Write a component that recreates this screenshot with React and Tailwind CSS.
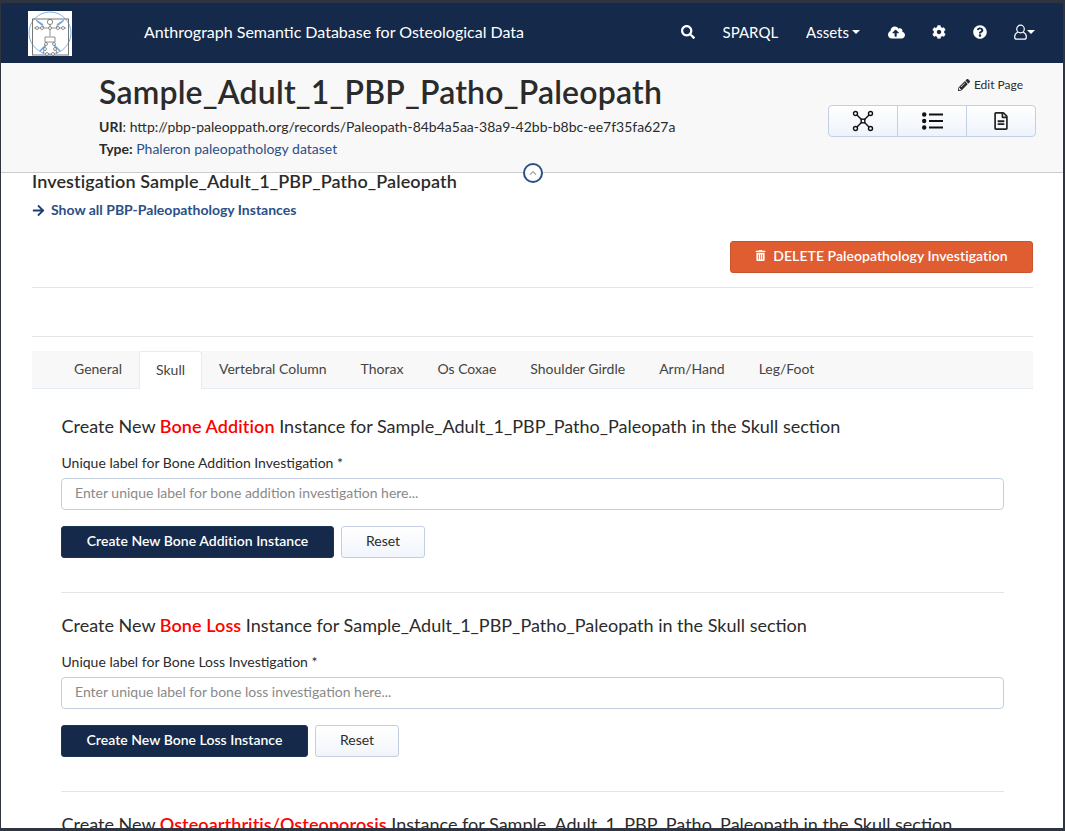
import React from "react";
import { FaSearch, FaCloudUploadAlt, FaCog, FaQuestionCircle, FaPencilAlt, FaTrashAlt, FaArrowRight, FaRegFileAlt, FaChevronUp } from "react-icons/fa";

function Logo() {
  return (
    <div className="w-[44px] h-[45px] bg-white shrink-0 mt-[3px]">
      <svg viewBox="0 0 44 45" className="w-full h-full" fill="none">
        <circle cx="22" cy="22" r="21" stroke="#7db4ea" strokeWidth="1" />
        <rect x="4.5" y="8" width="36" height="36" stroke="#777" strokeWidth="1" />
        <circle cx="22" cy="11" r="2.6" stroke="#666" strokeWidth="0.8" />
        <path d="M6 17h32M22 13.5v12M17 26h10v5H17zM18 31l-3 12M26 31l3 12M8 9l8 7M36 9l-8 7" stroke="#777" strokeWidth="0.8" />
        <path d="M9 10l6 4M35 10l-6 4M12 40l6-6M32 40l-6-6" stroke="#6aa8e6" strokeWidth="1.6" />
        {[[9,17],[14,17],[30,17],[35,17],[22,17],[18,33],[26,33],[17,38],[27,38],[19,43],[25,43]].map(([x,y],i)=>(
          <circle key={i} cx={x} cy={y} r="1.5" fill="#fff" stroke="#666" strokeWidth="0.7" />
        ))}
      </svg>
    </div>
  );
}

function NetworkIcon() {
  return (
    <svg width="22" height="22" viewBox="0 0 22 22" fill="none" stroke="#111" strokeWidth="1.4">
      <circle cx="3.5" cy="3.5" r="2" /><circle cx="18.5" cy="3.5" r="2" />
      <circle cx="3.5" cy="18.5" r="2" /><circle cx="18.5" cy="18.5" r="2" />
      <rect x="9.2" y="9.2" width="3.6" height="3.6" />
      <path d="M5 5l4.2 4.2M17 5l-4.2 4.2M5 17l4.2-4.2M17 17l-4.2-4.2" />
    </svg>
  );
}

function ListIcon() {
  return (
    <svg width="21" height="18" viewBox="0 0 21 18" fill="#111">
      <circle cx="2.2" cy="2.5" r="2.2" /><circle cx="2.2" cy="9" r="2.2" /><circle cx="2.2" cy="15.5" r="2.2" />
      <rect x="7" y="1.5" width="14" height="2" /><rect x="7" y="8" width="14" height="2" /><rect x="7" y="14.5" width="14" height="2" />
    </svg>
  );
}

function UserIcon() {
  return (
    <svg width="13" height="16" viewBox="0 0 13 16" fill="none" stroke="#fff" strokeWidth="1.2">
      <circle cx="6.5" cy="5" r="3.8" />
      <path d="M3.9 8.2C1.8 9 .7 10.6.7 12.6v.6c0 1.2.9 2 2 2h7.6c1.1 0 2-.8 2-2v-.6c0-2-1.1-3.6-3.2-4.4" />
    </svg>
  );
}

function Caret() {
  return <span className="inline-block w-0 h-0 border-x-[4px] border-x-transparent border-t-[4px] border-t-white" />;
}

function Section({ name, lower, width, last }) {
  return (
    <div>
      <h2 className="pl-[0.5px] text-[18px] leading-[22px] text-[#2b2b2b] whitespace-nowrap">
        Create New <span className="text-[#ff0000] font-semibold tracking-[0.08px]">{name}</span> Instance for Sample_Adult_1_PBP_Patho_Paleopath in the Skull section
      </h2>
      {!last && (
        <>
          <label className="block pl-[0.5px] mt-[17px] text-[14px] leading-[17px] text-[#2b2b2b]">Unique label for {name} Investigation *</label>
          <input
            readOnly
            placeholder={`Enter unique label for ${lower} investigation here...`}
            className="block mt-[7px] w-[943px] h-[32px] px-[13px] pb-[4px] text-[14px] bg-white border border-[#c3cfe0] rounded-[4px] placeholder:text-[#8a8a8a]"
          />
          <div className="flex gap-[7px] mt-[16px]">
            <button className="h-[32px] pb-[4px] whitespace-nowrap text-[14px] font-semibold tracking-[0.03px] text-white bg-[#152a4a] border border-[#1d3557] rounded-[3px]" style={{ width }}>Create New {name} Instance</button>
            <button className="h-[32px] w-[84px] pb-[4px] text-[14px] text-[#2b2b2b] bg-gradient-to-b from-white to-[#f1f5fb] border border-[#c3cfe0] rounded-[3px]">Reset</button>
          </div>
          <div className="mt-[34px] mb-[21px] w-[943px] border-t border-[#e5e5e5]" />
        </>
      )}
    </div>
  );
}

export default function App() {
  const tabs = ["General", "Skull", "Vertebral Column", "Thorax", "Os Coxae", "Shoulder Girdle", "Arm/Hand", "Leg/Foot"];
  return (
    <div className="w-[1065px] h-[831px] overflow-hidden bg-[#2e3440] pt-[3px] pl-[1px] pr-[2px] pb-[3px] font-['Lato',sans-serif] text-[#2b2b2b]">
      <div className="relative h-full bg-white overflow-hidden">
        <nav className="h-[60px] bg-[#152a4a] flex items-center pl-[27px] pr-[28px] text-white pb-[2px]">
          <Logo />
          <span className="ml-[72px] text-[16px]">Anthrograph Semantic Database for Osteological Data</span>
          <div className="ml-auto flex items-center">
            <FaSearch className="text-[14px]" />
            <span className="ml-[28px] text-[15px]">SPARQL</span>
            <span className="ml-[28px] text-[15px] flex items-center gap-[3px]">Assets <Caret /></span>
            <FaCloudUploadAlt className="ml-[28px] text-[17px]" />
            <FaCog className="ml-[27px] text-[14px]" />
            <FaQuestionCircle className="ml-[27px] text-[14px]" />
            <span className="ml-[27px] flex items-center"><UserIcon /><Caret /></span>
          </div>
        </nav>

        <header className="relative h-[110px] bg-[#f8f8f8] border-b border-[#cccccc] flex justify-between pl-[98px] pr-[27px]">
          <div>
            <h1 className="mt-[10px] text-[32px] leading-[38px] font-semibold tracking-[0.18px] text-[#2b2b2b] whitespace-nowrap">Sample_Adult_1_PBP_Patho_Paleopath</h1>
            <p className="mt-[7px] text-[14px] leading-[17px] whitespace-nowrap"><b className="font-bold">URI</b>: http://pbp-paleoppath.org/records/Paleopath-84b4a5aa-38a9-42bb-b8bc-ee7f35fa627a</p>
            <p className="mt-[5px] text-[14px] leading-[17px]"><b className="font-bold">Type:</b> <span className="text-[#2c4f85]">Phaleron paleopathology dataset</span></p>
          </div>
          <div className="flex flex-col items-end">
            <div className="mt-[14px] mr-[13px] flex items-center gap-[4px] text-[12px] leading-[15px]"><FaPencilAlt className="text-[12px]" />Edit Page</div>
            <div className="mt-[13px] w-[208px] h-[32px] flex border border-[#c3d0e4] rounded-[4px] bg-gradient-to-b from-white to-[#eef3fb]">
              <div className="flex-1 flex items-center justify-center border-r border-[#c3d0e4]"><NetworkIcon /></div>
              <div className="flex-1 flex items-center justify-center border-r border-[#c3d0e4]"><ListIcon /></div>
              <div className="flex-1 flex items-center justify-center"><FaRegFileAlt className="text-[18px] text-[#222]" /></div>
            </div>
          </div>
        </header>
        <div className="absolute left-[522px] top-[160px] w-[20px] h-[20px] rounded-full bg-white border-2 border-[#2c5285] flex items-center justify-center">
          <FaChevronUp className="text-[8px] text-[#aaa]" />
        </div>

        <main className="pl-[31px] pr-[30px]">
          <h3 className="text-[18px] leading-[16px] font-semibold tracking-[0.1px] text-[#2b2b2b] whitespace-nowrap">Investigation Sample_Adult_1_PBP_Patho_Paleopath</h3>
          <a className="mt-[13px] flex items-center gap-[6px] text-[14px] leading-[16px] font-bold text-[#2c4f85]"><FaArrowRight className="text-[13px] text-[#1f3f73]" />Show all PBP-Paleopathology Instances</a>
          <div className="flex justify-end mt-[23px]">
            <button className="h-[32px] w-[303px] pb-[4px] flex items-center justify-center gap-[7px] bg-[#e05d31] border border-[#c9532b] rounded-[3px] text-white text-[14px] font-semibold tracking-[0.05px]">
              <FaTrashAlt className="text-[11px]" />DELETE Paleopathology Investigation
            </button>
          </div>
          <div className="mt-[14px] border-t border-[#e5e5e5]" />
          <div className="mt-[48px] border-t border-[#e5e5e5]" />
          <div className="mt-[14px] h-[38px] flex bg-[#f8f8f8] border-b border-[#e6ecf5] pl-[25px] text-[14px] text-[#444]">
            {tabs.map((t) => (
              <div key={t} className={t === "Skull" ? "h-[38px] px-[16px] pb-[3px] flex items-center bg-white border border-[#e6ecf5] border-b-0 rounded-t-[3px]" : "h-[34px] px-[17px] flex items-center"}>{t}</div>
            ))}
          </div>
          <div className="pl-[29px] pt-[26px]">
            <Section name="Bone Addition" lower="bone addition" width="273px" />
            <Section name="Bone Loss" lower="bone loss" width="247px" />
            <Section name="Osteoarthritis/Osteoporosis" last />
          </div>
        </main>
      </div>
    </div>
  );
}
